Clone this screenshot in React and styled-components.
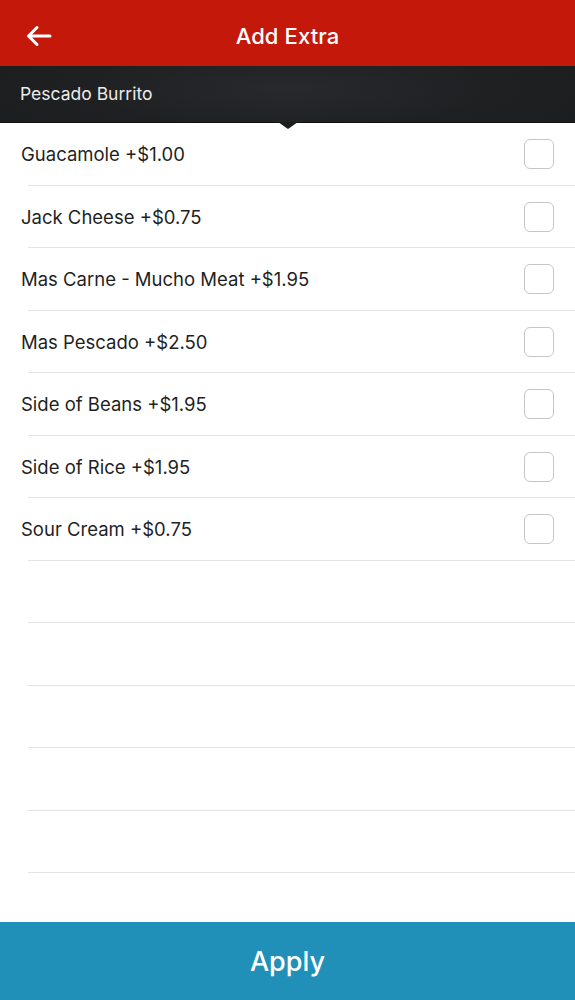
import React from 'react'
import styled, { createGlobalStyle } from 'styled-components'

const GlobalStyle = createGlobalStyle`
    html, body {
        margin: 0;
        padding: 0;
        background: #fff;
    }
    * {
        box-sizing: border-box;
    }
`

const extras = [
    'Guacamole +$1.00',
    'Jack Cheese +$0.75',
    'Mas Carne - Mucho Meat +$1.95',
    'Mas Pescado +$2.50',
    'Side of Beans +$1.95',
    'Side of Rice +$1.95',
    'Sour Cream +$0.75',
]

const EMPTY_ROWS = 5

function App() {
    return (
        <>
            <GlobalStyle />
            <Screen>
                <Header>
                    <BackButton aria-label="Back">
                        <svg width="26" height="22" viewBox="0 0 26 22" fill="none">
                            <path d="M24 11H3M11 2.5L2.5 11L11 19.5" stroke="#fff" strokeWidth="3" strokeLinecap="round" strokeLinejoin="round" />
                        </svg>
                    </BackButton>
                    <Title>Add Extra</Title>
                </Header>
                <SubBar>
                    <SubTitle>Pescado Burrito</SubTitle>
                </SubBar>
                <List>
                    {extras.map((label) => (
                        <Row key={label}>
                            <Label>{label}</Label>
                            <Checkbox />
                        </Row>
                    ))}
                    {Array.from({ length: EMPTY_ROWS }).map((_, i) => (
                        <Row key={'empty' + i} />
                    ))}
                </List>
                <ApplyButton>Apply</ApplyButton>
            </Screen>
        </>
    )
}

const Screen = styled.div`
    display: flex;
    flex-direction: column;
    height: 1000px;
    width: 100%;
    font-family: Inter, "Liberation Sans", sans-serif;
`

const Header = styled.header`
    position: relative;
    height: 66px;
    flex-shrink: 0;
    background: #c4180b;
    display: flex;
    align-items: center;
    justify-content: center;
    padding-top: 5px;
`

const BackButton = styled.button`
    position: absolute;
    left: 26px;
    top: calc(50% + 3px);
    transform: translateY(-50%);
    background: none;
    border: none;
    padding: 0;
    display: flex;
    cursor: pointer;
`

const Title = styled.h1`
    margin: 0;
    color: #fff;
    font-size: 22px;
    font-weight: 500;
    letter-spacing: 0.1px;
`

const SubBar = styled.div`
    position: relative;
    height: 57px;
    flex-shrink: 0;
    background: radial-gradient(ellipse 60% 120% at 50% 40%, #28292c 0%, #1f2022 60%, #1c1d1f 100%);
    border-bottom: 1px solid #111;
    display: flex;
    align-items: center;
    padding: 0 20px 1px;
    z-index: 1;

    &:after {
        content: "";
        position: absolute;
        left: 50%;
        bottom: -7px;
        margin-left: -10px;
        border-left: 10px solid transparent;
        border-right: 10px solid transparent;
        border-top: 7px solid #1c1d1f;
    }
`

const SubTitle = styled.span`
    color: #ececec;
    font-size: 17.5px;
    font-weight: 400;
`

const List = styled.div`
    flex: 1;
    background: #fff;
`

const Row = styled.div`
    height: 62.5px;
    display: flex;
    align-items: center;
    justify-content: space-between;
    padding: 0 21px;
    position: relative;

    &:after {
        content: "";
        position: absolute;
        left: 28px;
        right: 0;
        bottom: 0;
        height: 1px;
        background: #e3e3e3;
    }
`

const Label = styled.span`
    color: #1f1f1f;
    font-size: 18.5px;
    font-weight: 400;
`

const Checkbox = styled.span`
    width: 30px;
    height: 30px;
    border: 1.5px solid #c6c6c6;
    border-radius: 6px;
    background: #fff;
`

const ApplyButton = styled.button`
    height: 78px;
    flex-shrink: 0;
    width: 100%;
    border: none;
    background: #2190b9;
    color: #fff;
    font-family: inherit;
    font-size: 27px;
    font-weight: 500;
    cursor: pointer;
`

export default App
